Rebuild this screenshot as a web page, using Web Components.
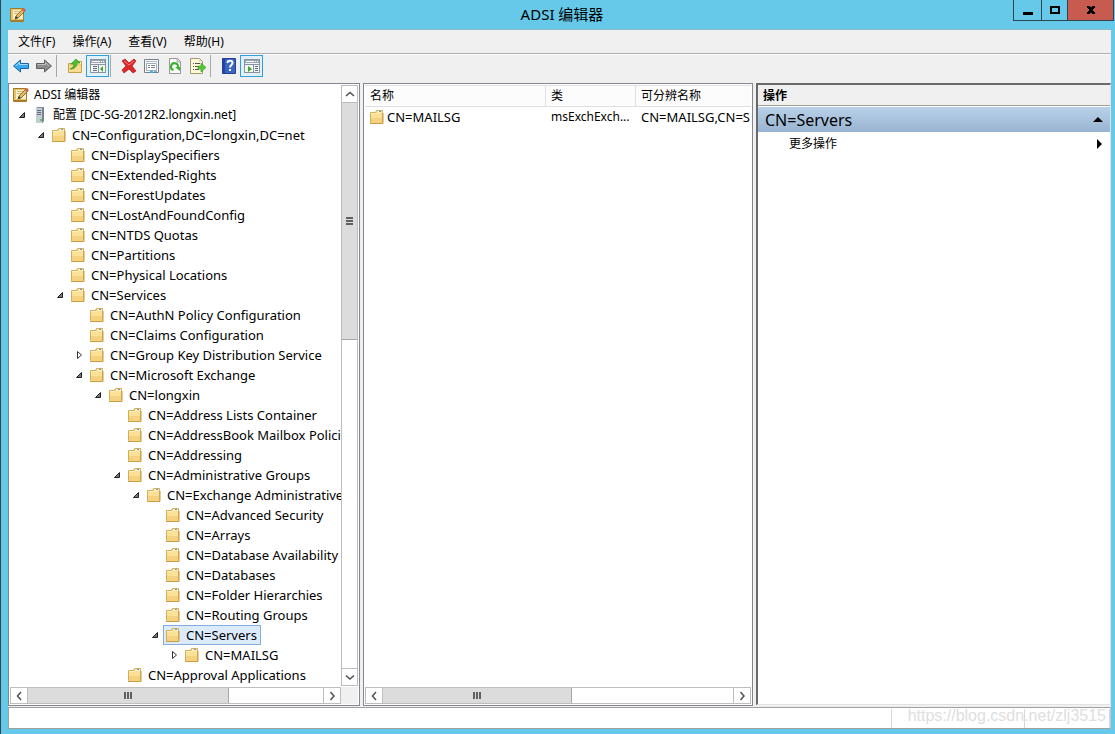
<!DOCTYPE html>
<html lang="zh-CN">
<head>
<meta charset="utf-8">
<title>ADSI 编辑器</title>
<style>
  html, body { margin: 0; height: 100%; }
  body {
    background: #66c9ea;
    color: #000;
    font: 12px/20px "Noto Sans", "Noto Sans CJK SC", sans-serif;
  }
</style>
</head>
<body>
<adsi-window></adsi-window>

<script>
const sheet = `
  *, *::before, *::after { box-sizing: border-box; }
  button { font: inherit; color: inherit; background: none; border: 0; margin: 0; padding: 0; }
`;

function define(name, html, setup) {
  const template = document.createElement('template');
  template.innerHTML = `<style>${sheet}</style>${html}`;
  customElements.define(name, class extends HTMLElement {
    connectedCallback() {
      if (this.shadowRoot) return;
      this.attachShadow({ mode: 'open' }).append(template.content.cloneNode(true));
      if (setup) setup(this, this.shadowRoot);
    }
  });
}

const windowPanel = `
  <rect x=".5" y="1.500" width="15" height="13" fill="#f4f5f7" stroke="#8a93a0"/>
  <path d="M1 2h14v3H1z" fill="#9aa4b2"/><path d="M2 3.500h8" stroke="#fff"/><path d="M11 3.500h1m1 0h1" stroke="#fff"/>
  <path d="M1 6.500h14" stroke="#8a93a0"/>`;

const icons = {
  app: `<path d="M.5 1.500h13v13H.5z" fill="#e6c468" stroke="#a37b29"/><path d="M3 3h10v9H3z" fill="#f8efcd"/>
    <path d="M1 13h12v2H1z" fill="#a67c2a"/><path d="M4 4.500h6M4 6.500h4" stroke="#d3bb7c"/>
    <path d="M5 12l1-3 7-7 2 2-7 7z" fill="#efba50" stroke="#6f5330" stroke-width=".8"/>
    <path d="M12 3l2-2 2 2-2 2z" fill="#d9595c"/><path d="M5 12l1-3 2 2z" fill="#423c37"/>`,
  server: `<path d="M4 1l1-1h7v14l-2 2H4z" fill="#87949c"/><path d="M4 1h6v15H4z" fill="#c3cdd3"/>
    <path d="M5 3.500h4M5 5.500h4M5 7.500h4" stroke="#5d6b74"/><path d="M10 1l2-1v14l-2 2z" fill="#77858e"/>
    <path d="M8 12h2v2H8z" fill="#53d53d"/>`,
  folder: `<path d="M1.500 3.500h5l1-2h6v12h-12z" fill="#e9c871" stroke="#d6ae58"/>
    <path d="M8 2h5v2H8z" fill="#fff3cd"/><path d="M10 2.500h2" stroke="#4c9fe0"/>
    <path d="M2 4h6l1-1h4v11H2z" fill="#fbe097"/><path d="M2 4.500h6l1-1h4" fill="none" stroke="#fff0bd"/>
    <path d="M2 9h11v5H2z" fill="#f4d27f"/><path d="M1 14.500h13V4" fill="none" stroke="#c99e43"/>`,
  back: `<path d="M.5 8l7-6v3.500h8v5h-8V14z" fill="#38a9ec" stroke="#1467ae"/><path d="M2.500 8l4-3.500v2h8" fill="none" stroke="#a5dcfa"/>`,
  forward: `<path d="M15.500 8l-7-6v3.500h-8v5h8V14z" fill="#8c8c8c" stroke="#5f5f5f"/><path d="M1.500 6.500h8v-2L13 8" fill="none" stroke="#bfbfbf"/>`,
  up: `<path d="M1.500 5.500h5l1-2h7v11h-13z" fill="#efd07c" stroke="#c79f4c"/><path d="M9 4h5v2H9z" fill="#fff3cd"/>
    <path d="M2 8h12v6H2z" fill="#f7dc91"/><path d="M3 11c3-1 4-3 4-5H4l5-5 4 4h-3c0 4-3 6-7 6z" fill="#4fc230" stroke="#2e8c19" stroke-width=".7"/>`,
  tree: `${windowPanel}<path d="M3 8.500h4M3 10.500h4M3 12.500h4" stroke="#5f6c7b"/><path d="M8.500 6v9" stroke="#8a93a0"/><path d="M13 8v6l-3-3z" fill="#38aa25"/>`,
  remove: `<path d="M1 3l3-2 4 4 5-4 2 2-4 5 4 5-3 2-4-4-5 4-2-3 4-4z" fill="#df2727" stroke="#a91717" stroke-width=".7"/><path d="M3 3l5 4 5-4" fill="none" stroke="#fa7770"/>`,
  properties: `<path d="M.5 1.500h14v13H.5z" fill="#f9fafb" stroke="#76818d"/><path d="M2 3.500h11" stroke="#aab5c1"/>
    <path d="M2.500 5.500h10v7h-10z" fill="#fff" stroke="#a1adba"/><path d="M4 7.500h2m1 0h4M4 9.500h2m1 0h4" stroke="#7a8694"/><path d="M6 13h3v2H6z" fill="#27b7ed"/><path d="M10 13h3v1h-3z" fill="#9aa5b1"/>`,
  refresh: `<path d="M2.500.5h8l3 3v12h-11z" fill="#fbfbf8" stroke="#969696"/><path d="M10 1v3h3" fill="#ddd" stroke="#aaa"/>
    <path d="M6.500 12a3.500 3.500 0 1 1 4.500-3" fill="none" stroke="#37ae2c" stroke-width="2"/><path d="M8 9h5v4z" fill="#37ae2c"/>`,
  export: `<path d="M.5.5h9l3 3v12H.5z" fill="#fff9d5" stroke="#a2997a"/><path d="M9 1v3h3" fill="#ddd7b8"/>
    <path d="M3 5.500h1m1 0h5M3 8.500h1m1 0h4M3 11.500h1m1 0h4" stroke="#555"/><path d="M8 8h3V5l5 4.500-5 4.500v-3H8z" fill="#55c638" stroke="#319b1d" stroke-width=".6"/>`,
  help: `<path d="M1.500.5h13v15h-13z" fill="#3864c8" stroke="#263f95"/><path d="M2 1h2v14H2z" fill="#26449d"/>
    <path d="M6.500 5c0-3 5-3 5 0 0 2-2.500 2-2.500 4.500" fill="none" stroke="#fff" stroke-width="2"/><path d="M8 11h2v2H8z" fill="#fff"/>`,
  action: `${windowPanel}<path d="M9.500 6v9" stroke="#8a93a0"/><path d="M11 8.500h3M11 10.500h3M11 12.500h3" stroke="#5f6c7b"/><path d="M4 8v6l4-3z" fill="#38aa25"/>`,
  minimize: `<path d="M3 10h10v3H3z"/>`,
  maximize: `<path d="M3 4h10v8H3zM5 6v4h6V6z" fill-rule="evenodd"/>`,
  close: `<path d="M4 4h3v1h2V4h3v2h-1v1h-1v2h1v1h1v2H9v-1H7v1H4v-2h1V9h1V7H5V6H4z"/>`,
  open: `<path d="M12.500 5.500v5h-5z" fill="#777" stroke="#222"/>`,
  closed: `<path d="M8.500 4.500v7l4-3.500z" fill="#fff" stroke="#333"/>`,
  left: `<path d="M10 4L6.500 8l3.500 4" fill="none" stroke="#505050" stroke-width="1.500"/>`,
  right: `<path d="M6.500 4L10 8l-3.500 4" fill="none" stroke="#505050" stroke-width="1.500"/>`,
  top: `<path d="M4 10l4-3.500L12 10" fill="none" stroke="#505050" stroke-width="1.500"/>`,
  bottom: `<path d="M4 6.500L8 10l4-3.500" fill="none" stroke="#505050" stroke-width="1.500"/>`,
  collapse: `<path d="M3 10h10L8 5z"/>`,
  more: `<path d="M7 3v10l5-5z"/>`
};

define('mmc-icon', `
  <style>:host { display: block; flex: none; width: 16px; height: 16px; } svg { display: block; }</style>
  <svg width="16" height="16" viewBox="0 0 16 16" aria-hidden="true"></svg>`,
  (host, root) => { root.querySelector('svg').innerHTML = icons[host.getAttribute('name')]; });

define('title-bar', `
  <style>
    :host { display: grid; grid-template-columns: 1fr auto 1fr; height: 29px; padding: 0 1px 0 9px; }
    .logo { margin-top: 7px; }
    h1 { margin: 0; font-size: 15px; font-weight: 400; line-height: 29px; }
    .controls { justify-self: end; display: flex; height: 21px; border: 1px solid #2e4450; border-top: 0; }
    button { width: 28px; display: grid; place-items: center; border-right: 1px solid #2e4450; }
    .max { width: 26px; }
    .close { width: 45px; border: 0; background: #c75b50; }
  </style>
  <mmc-icon class="logo" name="app"></mmc-icon>
  <h1>ADSI 编辑器</h1>
  <div class="controls">
    <button aria-label="最小化"><mmc-icon name="minimize"></mmc-icon></button>
    <button class="max" aria-label="最大化"><mmc-icon name="maximize"></mmc-icon></button>
    <button class="close" aria-label="关闭"><mmc-icon name="close"></mmc-icon></button>
  </div>`);

define('menu-bar', `
  <style>
    :host { display: flex; gap: 1px; height: 25px; padding: 0 2px; background: #f0f0f0; border-top: 1px solid #8fbccd; border-bottom: 1px solid #b0b0b4; }
    button { padding: 0 8px; line-height: 23px; }
  </style>
  <button>文件(F)</button><button>操作(A)</button><button>查看(V)</button><button>帮助(H)</button>`);

define('tool-bar', `
  <style>
    :host { display: flex; height: 29px; padding: 0 1px; background: #f0f0f0; border-top: 1px solid #fafafa; }
    button { width: 23px; height: 22px; display: grid; place-items: center; }
    .on { border: 1px solid #2f9fdd; background: #e2f0fa; }
    i { width: 8px; height: 22px; padding-left: 1px; }
    i::before { content: ""; display: block; width: 1px; height: 100%; background: #a8a8a8; }
  </style>
  <button aria-label="后退"><mmc-icon name="back"></mmc-icon></button>
  <button aria-label="前进"><mmc-icon name="forward"></mmc-icon></button><i></i>
  <button aria-label="向上一级"><mmc-icon name="up"></mmc-icon></button>
  <button class="on" aria-label="显示控制台树"><mmc-icon name="tree"></mmc-icon></button><i></i>
  <button aria-label="删除"><mmc-icon name="remove"></mmc-icon></button>
  <button aria-label="属性"><mmc-icon name="properties"></mmc-icon></button>
  <button aria-label="刷新"><mmc-icon name="refresh"></mmc-icon></button>
  <button aria-label="导出列表"><mmc-icon name="export"></mmc-icon></button><i></i>
  <button aria-label="帮助"><mmc-icon name="help"></mmc-icon></button>
  <button class="on" aria-label="显示操作窗格"><mmc-icon name="action"></mmc-icon></button>`);

define('scroll-bar', `
  <style>
    :host { display: flex; height: 17px; background: #fff; border: 1px solid #bdbdbd; }
    :host([vertical]) { flex-direction: column; width: 17px; height: auto; }
    button { flex: none; width: 16px; height: 15px; display: grid; place-items: center; overflow: hidden; }
    :host([vertical]) button { width: 15px; height: 16px; }
    .track { flex: 1; display: flex; border: 0 solid #bdbdbd; border-width: 0 1px; }
    :host([vertical]) .track { flex-direction: column; border-width: 1px 0; }
    .thumb { flex: none; flex-basis: var(--thumb); display: flex; align-items: center; justify-content: center; gap: 1px; background: #dcdcdc; border: 0 solid #a6a6a6; border-right-width: 1px; }
    :host([vertical]) .thumb { flex-direction: column; border-width: 0 0 1px; }
    .thumb b { width: 2px; height: 7px; background: #606060; }
    :host([vertical]) .thumb b { width: 7px; height: 2px; }
  </style>
  <button class="prev" aria-label="向前滚动"></button>
  <div class="track"><div class="thumb"><b></b><b></b><b></b></div></div>
  <button class="next" aria-label="向后滚动"></button>`,
  (host, root) => {
    const vertical = host.hasAttribute('vertical');
    root.querySelector('.prev').innerHTML = `<mmc-icon name="${vertical ? 'top' : 'left'}"></mmc-icon>`;
    root.querySelector('.next').innerHTML = `<mmc-icon name="${vertical ? 'bottom' : 'right'}"></mmc-icon>`;
  });

define('tree-item', `
  <style>
    :host { display: flex; height: 20px; padding-left: calc(1px + var(--depth) * 19px); white-space: nowrap; font-size: 13px; }
    :host([top]) { font-size: 12px; }
    .toggle { width: 19px; height: 20px; flex: none; padding-left: 1px; display: grid; align-items: center; justify-items: start; }
    :host([root]) .toggle { display: none; }
    .item { display: flex; align-items: center; gap: 5px; padding: 0 3px 0 1px; border: 1px solid transparent; height: 20px; line-height: 18px; }
    :host([selected]) .item { background: #dcebfc; border-color: #84acdd; }
  </style>
  <button class="toggle" tabindex="-1" aria-label="展开或折叠"></button>
  <span class="item"><mmc-icon></mmc-icon><slot></slot></span>`,
  (host, root) => {
    const level = Number(host.getAttribute('level'));
    const state = host.getAttribute('state');
    host.setAttribute('role', 'treeitem');
    host.setAttribute('aria-level', level + 1);
    host.style.setProperty('--depth', Math.max(level - 1, 0));
    host.toggleAttribute('root', level === 0);
    host.toggleAttribute('top', level < 2);
    if (state) root.querySelector('.toggle').innerHTML = `<mmc-icon name="${state}"></mmc-icon>`;
    const icon = document.createElement('mmc-icon');
    icon.setAttribute('name', host.getAttribute('icon') || 'folder');
    root.querySelector('.item mmc-icon').replaceWith(icon);
  });

define('console-tree', `
  <style>
    :host { display: grid; grid-template: minmax(0, 1fr) 17px / minmax(0, 1fr) 17px; row-gap: 1px; padding: 1px; background: #fff; border: 1px solid #828790; min-width: 0; }
    .tree { overflow: hidden; }
    scroll-bar[vertical] { --thumb: 42%; }
    .across { --thumb: 68%; }
    .corner { background: #f0f0f0; }
  </style>
  <div class="tree" role="tree" aria-label="控制台树">
    <tree-item level="0" icon="app">ADSI 编辑器</tree-item>
    <tree-item level="1" icon="server" state="open">配置 [DC-SG-2012R2.longxin.net]</tree-item>
    <tree-item level="2" state="open">CN=Configuration,DC=longxin,DC=net</tree-item>
    <tree-item level="3">CN=DisplaySpecifiers</tree-item>
    <tree-item level="3">CN=Extended-Rights</tree-item>
    <tree-item level="3">CN=ForestUpdates</tree-item>
    <tree-item level="3">CN=LostAndFoundConfig</tree-item>
    <tree-item level="3">CN=NTDS Quotas</tree-item>
    <tree-item level="3">CN=Partitions</tree-item>
    <tree-item level="3">CN=Physical Locations</tree-item>
    <tree-item level="3" state="open">CN=Services</tree-item>
    <tree-item level="4">CN=AuthN Policy Configuration</tree-item>
    <tree-item level="4">CN=Claims Configuration</tree-item>
    <tree-item level="4" state="closed">CN=Group Key Distribution Service</tree-item>
    <tree-item level="4" state="open">CN=Microsoft Exchange</tree-item>
    <tree-item level="5" state="open">CN=longxin</tree-item>
    <tree-item level="6">CN=Address Lists Container</tree-item>
    <tree-item level="6">CN=AddressBook Mailbox Policies</tree-item>
    <tree-item level="6">CN=Addressing</tree-item>
    <tree-item level="6" state="open">CN=Administrative Groups</tree-item>
    <tree-item level="7" state="open">CN=Exchange Administrative G</tree-item>
    <tree-item level="8">CN=Advanced Security</tree-item>
    <tree-item level="8">CN=Arrays</tree-item>
    <tree-item level="8">CN=Database Availability G</tree-item>
    <tree-item level="8">CN=Databases</tree-item>
    <tree-item level="8">CN=Folder Hierarchies</tree-item>
    <tree-item level="8">CN=Routing Groups</tree-item>
    <tree-item level="8" state="open" selected>CN=Servers</tree-item>
    <tree-item level="9" state="closed">CN=MAILSG</tree-item>
    <tree-item level="6">CN=Approval Applications</tree-item>
  </div>
  <scroll-bar vertical></scroll-bar>
  <scroll-bar class="across"></scroll-bar>
  <div class="corner"></div>`);

define('result-list', `
  <style>
    :host { display: flex; flex-direction: column; padding: 1px; background: #fff; border: 1px solid #828790; min-width: 0; }
    .view { flex: 1; overflow: hidden; }
    table { border-collapse: separate; border-spacing: 0; table-layout: fixed; width: 480px; }
    .name { width: 181px; } .class { width: 90px; }
    th, td { height: 21px; padding: 0 5px; text-align: left; font-weight: 400; line-height: 20px; white-space: nowrap; overflow: hidden; }
    th { background: #fcfcfc; border: solid #e0e0e0; border-width: 1px 1px 1px 0; }
    td { vertical-align: top; font-size: 13px; }
    td:first-child { padding-left: 4px; }
    td:nth-child(2) { font-size: 12px; }
    .entry { display: flex; align-items: center; gap: 2px; }
    scroll-bar { flex: none; --thumb: 54%; }
  </style>
  <div class="view">
    <table>
      <colgroup><col class="name"><col class="class"><col></colgroup>
      <thead><tr><th>名称</th><th>类</th><th>可分辨名称</th></tr></thead>
      <tbody><tr>
        <td><span class="entry"><mmc-icon name="folder"></mmc-icon>CN=MAILSG</span></td>
        <td>msExchExch...</td>
        <td>CN=MAILSG,CN=S</td>
      </tr></tbody>
    </table>
  </div>
  <scroll-bar></scroll-bar>`);

define('actions-pane', `
  <style>
    :host { display: block; background: #fff; border: solid; border-width: 2px 1px 1px 2px; border-color: #696969 #e3e3e3 #e3e3e3 #696969; min-width: 0; }
    h2 { margin: 0; height: 21px; padding-left: 5px; font-size: 12px; line-height: 22px; background: #f0f0f0; border-bottom: 1px solid #a0a0a0; }
    button { width: 100%; display: flex; align-items: center; justify-content: space-between; padding-right: 4px; text-align: left; }
    .group { height: 25px; margin-top: 1px; padding-left: 7px; font-size: 16px; background: linear-gradient(#b9d1ea, #99b4d1); }
    .item { height: 24px; padding-left: 31px; }
  </style>
  <h2>操作</h2>
  <button class="group">CN=Servers<mmc-icon name="collapse"></mmc-icon></button>
  <button class="item">更多操作<mmc-icon name="more"></mmc-icon></button>`);

define('status-bar', `
  <style>
    :host { position: relative; display: flex; justify-content: flex-end; height: 22px; background: #fff; border: 1px solid #a0a0a0; border-right-color: #c8c8c8; }
    .cell { margin-top: 1px; border-left: 1px solid #d7d7d7; }
    .wide { width: 133px; } .narrow { width: 85px; } .end { width: 1px; }
    .mark { position: absolute; right: 4px; top: -2px; font: 16px/20px "Liberation Sans", sans-serif; color: #dedede; }
  </style>
  <div class="cell wide"></div><div class="cell narrow"></div><div class="cell end"></div>
  <span class="mark">https://blog.csdn.net/zlj3515</span>`);

define('adsi-window', `
  <style>
    :host { display: flex; flex-direction: column; min-height: 100vh; border-left: 1px solid #34454e; box-sizing: border-box; }
    main { flex: 1; display: flex; flex-direction: column; margin: 0 4px 5px 7px; background: #f0f0f0; }
    .panes { flex: 1; display: grid; grid-template-columns: minmax(0, 352fr) minmax(0, 390fr) minmax(0, 355fr); gap: 3px; }
    status-bar { margin-top: 1px; }
    actions-pane { margin-bottom: 1px; }
  </style>
  <title-bar></title-bar>
  <main>
    <menu-bar></menu-bar>
    <tool-bar></tool-bar>
    <div class="panes">
      <console-tree></console-tree>
      <result-list></result-list>
      <actions-pane></actions-pane>
    </div>
    <status-bar></status-bar>
  </main>`);
</script>
</body>
</html>
